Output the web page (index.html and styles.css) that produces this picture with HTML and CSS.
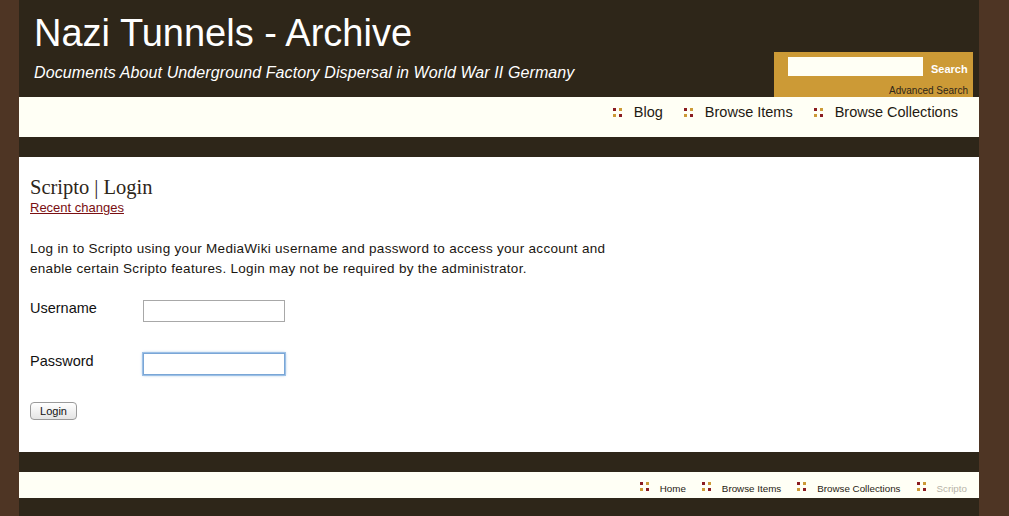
FILE: index.html
```html
<!DOCTYPE html>
<html>
<head>
<meta charset="utf-8">
<title>Scripto | Login</title>
<link rel="stylesheet" href="styles.css">
</head>
<body>
<div class="wrap">
  <header class="header">
    <div class="brand">
      <h1 class="site-title">Nazi Tunnels - Archive</h1>
      <p class="tagline">Documents About Underground Factory Dispersal in World War II Germany</p>
    </div>
    <form class="search">
      <div class="search-row">
        <input class="search-input" type="text">
        <span class="search-btn">Search</span>
      </div>
      <a class="adv" href="#">Advanced Search</a>
    </form>
  </header>
  <nav class="nav">
    <a class="nav-item" href="#"><span class="ico"><i class="r"></i><i class="g"></i><i class="g"></i><i class="r"></i></span>Blog</a>
    <a class="nav-item" href="#"><span class="ico"><i class="r"></i><i class="g"></i><i class="g"></i><i class="r"></i></span>Browse Items</a>
    <a class="nav-item" href="#"><span class="ico"><i class="r"></i><i class="g"></i><i class="g"></i><i class="r"></i></span>Browse Collections</a>
  </nav>
  <div class="band"></div>
  <main class="content">
    <h2 class="page-title">Scripto | Login</h2>
    <a class="recent" href="#">Recent changes</a>
    <p class="intro">Log in to Scripto using your MediaWiki username and password to access your account and enable certain Scripto features. Login may not be required by the administrator.</p>
    <div class="field">
      <label class="label">Username</label>
      <input class="text" type="text">
    </div>
    <div class="field">
      <label class="label">Password</label>
      <input class="text focus" type="password">
    </div>
    <button class="login" type="button">Login</button>
  </main>
  <div class="band"></div>
  <footer class="footer">
    <a class="f-item" href="#"><span class="ico"><i class="r"></i><i class="g"></i><i class="g"></i><i class="r"></i></span>Home</a>
    <a class="f-item" href="#"><span class="ico"><i class="r"></i><i class="g"></i><i class="g"></i><i class="r"></i></span>Browse Items</a>
    <a class="f-item" href="#"><span class="ico"><i class="r"></i><i class="g"></i><i class="g"></i><i class="r"></i></span>Browse Collections</a>
    <a class="f-item current" href="#"><span class="ico"><i class="r"></i><i class="g"></i><i class="g"></i><i class="r"></i></span>Scripto</a>
  </footer>
  <div class="bottom"></div>
</div>
</body>
</html>
```
FILE: styles.css
```css
html, body {
  margin: 0;
  padding: 0;
  background: #4e3524;
  height: 100%;
}
body {
  font-family: "Liberation Sans", Arial, sans-serif;
  color: #1f1a12;
}
.wrap {
  width: 960px;
  margin-left: 19px;
  background: #2e2619;
  min-height: 100%;
}
.header {
  height: 97px;
  display: flex;
  justify-content: space-between;
  align-items: flex-end;
  padding-right: 6px;
}
.brand {
  align-self: flex-start;
  padding-left: 15px;
}
.site-title {
  margin: 10px 0 0;
  font-size: 38px;
  line-height: 46px;
  font-weight: normal;
  color: #ffffff;
}
.tagline {
  margin: 8px 0 0;
  font-size: 16px;
  font-style: italic;
  letter-spacing: 0.1px;
  color: #ffffff;
}
.search {
  width: 199px;
  height: 45px;
  background: #cc9a36;
  box-sizing: border-box;
  padding: 5px 5px 0 14px;
  margin: 0;
}
.search-row {
  display: flex;
  align-items: center;
}
.search-input {
  width: 135px;
  height: 19px;
  box-sizing: border-box;
  border: none;
  background: #fffff5;
  margin: 0;
  padding: 0;
}
.search-btn {
  margin-left: 8px;
  margin-top: 4px;
  color: #ffffff;
  font-size: 11px;
  font-weight: bold;
}
.adv {
  display: block;
  text-align: right;
  font-size: 10px;
  color: #2e2619;
  text-decoration: none;
  margin-top: 9px;
}
.nav {
  height: 40px;
  background: #fffff5;
  display: flex;
  justify-content: flex-end;
  align-items: flex-start;
  gap: 21px;
  padding-right: 21px;
  padding-top: 7px;
  box-sizing: border-box;
}
.nav-item {
  display: flex;
  align-items: center;
  gap: 12px;
  font-size: 14.5px;
  color: #1f1a12;
  text-decoration: none;
  line-height: 17px;
}
.ico {
  display: grid;
  grid-template-columns: 3px 3px;
  grid-template-rows: 3px 3px;
  gap: 3px;
  flex: none;
}
.ico i {
  display: block;
  width: 3px;
  height: 3px;
}
.ico .r { background: #8b1c21; }
.ico .g { background: #cc9a36; }
.band {
  height: 20px;
}
.content {
  background: #ffffff;
  height: 295px;
  box-sizing: border-box;
  padding: 20px 11px 0;
}
.page-title {
  margin: 0;
  font-family: "Liberation Serif", Georgia, serif;
  font-weight: normal;
  font-size: 20.5px;
  line-height: 21px;
  color: #2e2619;
}
.recent {
  display: inline-block;
  font-size: 13px;
  color: #7a0f12;
  line-height: 16px;
}
.intro {
  margin: 23px 0 0;
  width: 620px;
  font-size: 13.5px;
  letter-spacing: 0.3px;
  line-height: 20px;
  color: #1a1610;
}
.field {
  display: flex;
  align-items: flex-start;
  margin-top: 21px;
}
.field + .field {
  margin-top: 31px;
}
.label {
  width: 113px;
  font-size: 14.5px;
  line-height: 16px;
  color: #111;
}
.text {
  width: 142px;
  height: 22px;
  box-sizing: border-box;
  border: 1px solid #a8a8a8;
  background: #fff;
  margin: 0;
  padding: 0;
}
.text.focus {
  border-color: #7aa6d6;
  box-shadow: 0 0 0 1px #9cc0e6, 0 0 3px #7aa6d6;
}
.login {
  display: block;
  margin-top: 27px;
  width: 47px;
  height: 18px;
  padding: 0;
  font-family: "Liberation Sans", Arial, sans-serif;
  font-size: 11px;
  border: 1px solid #9a9a9a;
  border-radius: 4px;
  background: linear-gradient(#ffffff, #e4e4e4);
  color: #111;
}
.footer {
  height: 26px;
  background: #fffff5;
  display: flex;
  justify-content: flex-end;
  align-items: flex-start;
  gap: 16px;
  padding-right: 12px;
  padding-top: 11px;
  box-sizing: border-box;
}
.f-item {
  display: flex;
  align-items: center;
  gap: 11px;
  font-size: 9.8px;
  line-height: 12px;
  color: #1f1a12;
  text-decoration: none;
}
.f-item .ico {
  margin-top: -5px;
}
.f-item.current {
  color: #b8b3a8;
}
.bottom {
  height: 18px;
}
```
